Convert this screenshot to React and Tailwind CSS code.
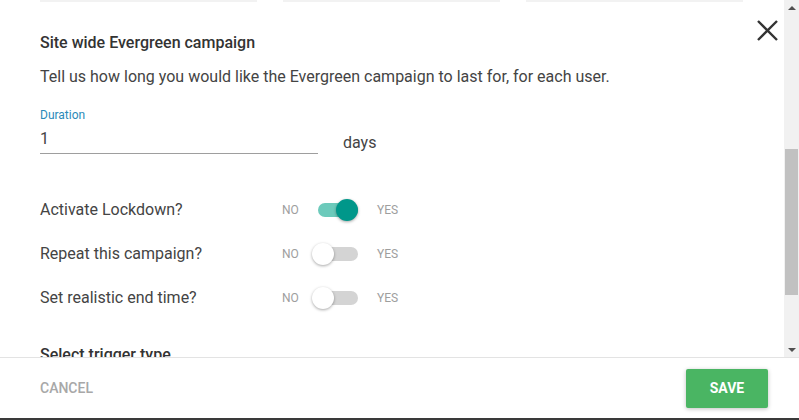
function Toggle({ label, on }) {
  return (
    <div className="flex items-center h-[44px]">
      <span className="w-[242px] text-[16px] leading-[20px] text-[#444]">{label}</span>
      <span className="w-[36px] text-[12px] text-[#9e9e9e]">NO</span>
      <div className="relative w-[40px] h-[22px] flex items-center">
        <div className={'w-[40px] h-[14px] rounded-full ' + (on ? 'bg-[#6ccabb]' : 'bg-[#d4d4d4]')} />
        <div
          className={
            'absolute top-0 w-[22px] h-[22px] rounded-full shadow-[0_1px_3px_rgba(0,0,0,0.35)] ' +
            (on ? 'right-0 bg-[#00978a]' : '-left-[6px] bg-white')
          }
        />
      </div>
      <span className="ml-[19px] text-[12px] text-[#9e9e9e]">YES</span>
    </div>
  )
}

export default function App() {
  return (
    <div className="w-[799px] h-[420px] flex flex-col bg-white overflow-hidden" style={{ fontFamily: 'Roboto, "Liberation Sans", sans-serif' }}>
      <div className="flex flex-1 min-h-0">
        <div className="relative flex-1 min-w-0 overflow-hidden pl-10 pr-[41px]">
          <div className="flex gap-[26px]">
            <div className="w-[217px] h-[2px] bg-[#f2f2f2]" />
            <div className="w-[217px] h-[2px] bg-[#f2f2f2]" />
            <div className="w-[217px] h-[2px] bg-[#f2f2f2]" />
          </div>
          <button className="absolute right-[6px] top-[20px] text-[#333]">
            <svg width="21" height="21" viewBox="0 0 21 21" fill="none" stroke="currentColor" strokeWidth="2.4">
              <path d="M1 1L20 20M20 1L1 20" />
            </svg>
          </button>
          <h2 className="mt-[31px] text-[16px] leading-[20px] font-medium text-[#333]">Site wide Evergreen campaign</h2>
          <p className="mt-[14px] text-[16px] leading-[20px] text-[#444]">
            Tell us how long you would like the Evergreen campaign to last for, for each user.
          </p>
          <div className="mt-[21px] flex items-end">
            <div className="w-[278px]">
              <div className="text-[12px] leading-[14px] text-[#2b8ab9]">Duration</div>
              <div className="mt-[7px] pb-[4px] border-b border-[#9e9e9e] text-[16px] leading-[20px] text-[#444]">1</div>
            </div>
            <span className="ml-[25px] mb-[1px] text-[16px] leading-[20px] text-[#444]">days</span>
          </div>
          <div className="mt-[34px]">
            <Toggle label="Activate Lockdown?" on />
            <Toggle label="Repeat this campaign?" />
            <Toggle label="Set realistic end time?" />
          </div>
          <h3 className="mt-[25px] text-[16px] leading-[20px] font-medium text-[#333]">Select trigger type</h3>
        </div>
        <div className="w-[15px] bg-[#f1f1f1] flex flex-col items-center">
          <div className="h-[15px] flex items-center justify-center">
            <div className="w-0 h-0 border-l-[4px] border-r-[4px] border-b-[4px] border-l-transparent border-r-transparent border-b-[#505050]" />
          </div>
          <div className="mt-[134px] w-[13px] h-[146px] bg-[#c1c1c1]" />
          <div className="flex-1" />
          <div className="h-[15px] flex items-center justify-center">
            <div className="w-0 h-0 border-l-[4px] border-r-[4px] border-t-[4px] border-l-transparent border-r-transparent border-t-[#505050]" />
          </div>
        </div>
      </div>
      <div className="h-[61px] border-t border-[#e3e3e3] flex items-center justify-between pl-10 pr-[31px]">
        <button className="text-[14px] font-medium text-[#a8a8a8] uppercase">Cancel</button>
        <button className="w-[82px] h-[39px] rounded-[2px] bg-[#4ab563] text-white text-[14px] font-bold shadow-[0_1px_4px_rgba(0,0,0,0.25)] uppercase">
          Save
        </button>
      </div>
      <div className="h-[2px] bg-[#3a3a3a]" />
    </div>
  )
}
